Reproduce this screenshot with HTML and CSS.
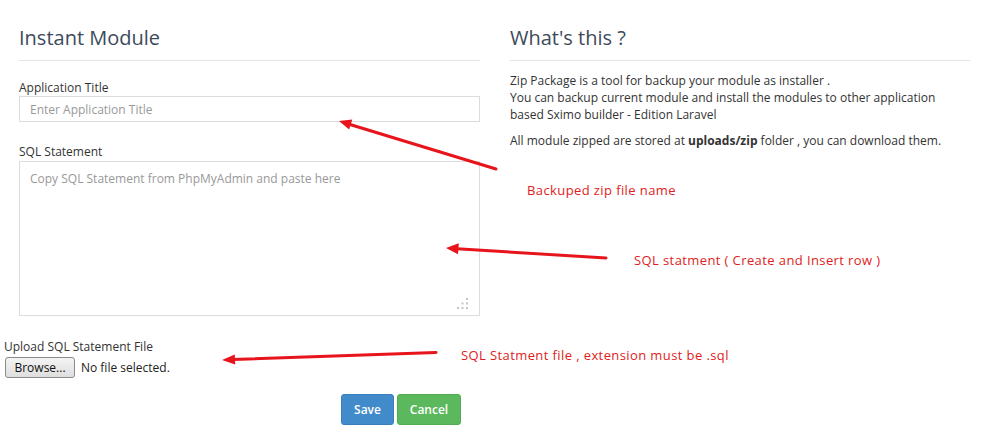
FILE: index.html
```html
<!DOCTYPE html>
<html>
<head>
<meta charset="utf-8">
<link rel="stylesheet" href="styles.css">
</head>
<body>
<div class="page">
  <div class="columns">
    <div class="col">
      <h3 class="title">Instant Module</h3>
      <div class="field">
        <label class="label">Application Title</label>
        <input class="input" type="text" placeholder="Enter Application Title">
      </div>
      <div class="field field-sql">
        <label class="label">SQL Statement</label>
        <div class="textarea-wrap">
          <textarea class="textarea" placeholder="Copy SQL Statement from PhpMyAdmin and paste here"></textarea>
          <svg class="grip" width="14" height="14" viewBox="0 0 14 14">
            <g fill="#c4c4c4">
              <rect x="10" y="1" width="2" height="2"/>
              <rect x="5.5" y="5.5" width="2" height="2"/>
              <rect x="10" y="5.5" width="2" height="2"/>
              <rect x="1" y="10" width="2" height="2"/>
              <rect x="5.5" y="10" width="2" height="2"/>
              <rect x="10" y="10" width="2" height="2"/>
            </g>
          </svg>
        </div>
      </div>
    </div>
    <div class="col">
      <h3 class="title">What's this ?</h3>
      <p class="info">Zip Package is a tool for backup your module as installer .<br>You can backup current module and install the modules to other application based Sximo builder - Edition Laravel</p>
      <p class="info info-2">All module zipped are stored at <b>uploads/zip</b> folder , you can download them.</p>
    </div>
  </div>
  <div class="upload">
    <div class="label">Upload SQL Statement File</div>
    <div class="file-row">
      <button class="browse" type="button">Browse...</button>
      <span class="nofile">No file selected.</span>
    </div>
  </div>
  <div class="actions">
    <button class="btn btn-save" type="button">Save</button>
    <button class="btn btn-cancel" type="button">Cancel</button>
  </div>

  <svg class="arrows" width="998" height="437" viewBox="0 0 998 437">
    <g stroke="#e8141b" stroke-width="3" stroke-linecap="round" fill="none">
      <line x1="496" y1="169" x2="350" y2="124.5"/>
      <line x1="606" y1="258" x2="457" y2="248.8"/>
      <line x1="436" y1="352.5" x2="233" y2="359.5"/>
    </g>
    <g fill="#e8141b">
      <polygon points="339,121 352.3,119.4 349.2,129.6"/>
      <polygon points="446,248 458.8,243.3 458,254.2"/>
      <polygon points="222,360 234.8,354.6 235.2,364.6"/>
    </g>
  </svg>
  <div class="note note-1">Backuped zip file name</div>
  <div class="note note-2">SQL statment ( Create and Insert row )</div>
  <div class="note note-3">SQL Statment file , extension must be .sql</div>
</div>
</body>
</html>
```
FILE: styles.css
```css
html, body {
  margin: 0;
  padding: 0;
  background: #fff;
}
body {
  font-family: "Open Sans", "Liberation Sans", sans-serif;
  font-size: 12px;
  color: #333;
}
.page {
  position: relative;
  width: 998px;
  height: 437px;
  overflow: hidden;
}
.columns {
  display: grid;
  grid-template-columns: 461px 460px;
  column-gap: 30px;
  padding: 26px 0 0 19px;
}
.title {
  margin: 0;
  font-size: 20px;
  font-weight: 400;
  line-height: 23px;
  color: #3d4a5a;
  padding-bottom: 11px;
  border-bottom: 1px solid #e6e6e6;
}
.field {
  display: flex;
  flex-direction: column;
  margin-top: 19px;
}
.field-sql {
  margin-top: 22px;
}
.label {
  line-height: 16px;
  color: #333;
}
.input {
  box-sizing: border-box;
  height: 26px;
  width: 100%;
  border: 1px solid #dcdcdc;
  padding: 0 10px;
  font-family: inherit;
  font-size: 12px;
  color: #555;
  outline: none;
  margin: 0;
}
.input::placeholder, .textarea::placeholder {
  color: #999;
}
.textarea-wrap {
  position: relative;
  margin-top: 1px;
}
.textarea {
  box-sizing: border-box;
  height: 155px;
  width: 100%;
  border: 1px solid #dcdcdc;
  padding: 8px 10px;
  margin: 0;
  font-family: inherit;
  font-size: 12px;
  color: #555;
  outline: none;
  resize: none;
  display: block;
}
.grip {
  position: absolute;
  right: 10px;
  bottom: 5px;
}
.info {
  margin: 11px 0 0 0;
  line-height: 17px;
  color: #333;
}
.info-2 {
  margin-top: 9px;
}
.info b {
  font-weight: 700;
}
.upload {
  padding-left: 4px;
  margin-top: 23px;
}
.file-row {
  display: flex;
  align-items: center;
  gap: 6px;
  margin-top: 2px;
}
.browse {
  box-sizing: border-box;
  width: 70px;
  height: 21px;
  margin: 0 0 0 1px;
  padding: 0;
  border: 1px solid #8a8a8a;
  border-radius: 3px;
  background: linear-gradient(#f4f4f4, #dedede);
  font-family: inherit;
  font-size: 12px;
  color: #111;
}
.nofile {
  color: #222;
}
.actions {
  display: flex;
  gap: 3px;
  padding-left: 341px;
  margin-top: 16px;
}
.btn {
  box-sizing: border-box;
  height: 31px;
  border: 1px solid transparent;
  border-radius: 3px;
  font-family: inherit;
  font-size: 12px;
  font-weight: 600;
  color: #fff;
  padding: 0;
}
.btn-save {
  width: 53px;
  background: #428bca;
  border-color: #3a7fbd;
}
.btn-cancel {
  width: 64px;
  background: #5cb85c;
  border-color: #52ad52;
}
.arrows {
  position: absolute;
  left: 0;
  top: 0;
  pointer-events: none;
}
.note {
  position: absolute;
  font-size: 13px;
  line-height: 16px;
  letter-spacing: 0.4px;
  color: #e01c22;
  white-space: nowrap;
}
.note-1 { left: 527px; top: 182px; }
.note-2 { left: 634px; top: 252px; }
.note-3 { left: 461px; top: 347px; }
```
